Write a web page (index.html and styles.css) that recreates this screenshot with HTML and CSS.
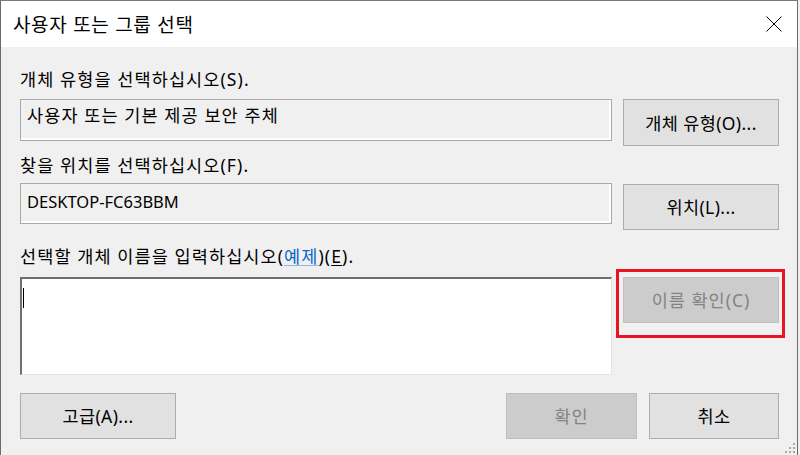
FILE: index.html
```html
<!DOCTYPE html>
<html lang="ko">
<head>
<meta charset="utf-8">
<link rel="stylesheet" href="styles.css">
</head>
<body>
<div class="window">
  <div class="titlebar">
    <span class="title">사용자 또는 그룹 선택</span>
    <div class="close">
      <svg width="16" height="16" viewBox="0 0 16 16"><path d="M0.5 0.5L15.5 15.5M15.5 0.5L0.5 15.5" stroke="#000" stroke-width="1" fill="none"/></svg>
    </div>
  </div>
  <div class="content">
    <div class="label l1">개체 유형을 선택하십시오(S).</div>
    <div class="row r1">
      <div class="field f1">사용자 또는 기본 제공 보안 주체</div>
      <div class="btn side">개체 유형(O)...</div>
    </div>
    <div class="label l2">찾을 위치를 선택하십시오(F).</div>
    <div class="row r2">
      <div class="field f2">DESKTOP-FC63BBM</div>
      <div class="btn side b2">위치(L)...</div>
    </div>
    <div class="label l3">선택할 개체 이름을 입력하십시오(<span class="link">예제</span>)(<span class="acc">E</span>).</div>
    <div class="row r3">
      <div class="names"><span class="caret"></span></div>
      <div class="hl">
        <div class="btn side disabled">이름 확인(C)</div>
      </div>
    </div>
    <div class="row bottom">
      <div class="btn adv">고급(A)...</div>
      <div class="spacer"></div>
      <div class="btn ok disabled">확인</div>
      <div class="btn cancel">취소</div>
    </div>
  </div>
  <svg class="grip" width="10" height="10" viewBox="0 0 10 10">
    <rect x="8" y="0" width="2" height="2" fill="#a8a8a8"/>
    <rect x="4" y="4" width="2" height="2" fill="#a8a8a8"/>
    <rect x="8" y="4" width="2" height="2" fill="#a8a8a8"/>
    <rect x="0" y="8" width="2" height="2" fill="#a8a8a8"/>
    <rect x="4" y="8" width="2" height="2" fill="#a8a8a8"/>
    <rect x="8" y="8" width="2" height="2" fill="#a8a8a8"/>
  </svg>
</div>
</body>
</html>
```
FILE: styles.css
```css
* { box-sizing: border-box; }
html, body { margin: 0; padding: 0; }
body {
  background: #f0f0f0;
  font-family: "Noto Sans", "Noto Sans CJK KR", sans-serif;
  color: #000;
}
.window {
  position: relative;
  width: 798px;
  height: 455px;
  border-left: 1px solid #6a6a6a;
  border-top: 1px solid #7a7a7a;
  border-right: 1px solid #6a6a6a;
  background: #f0f0f0;
  overflow: hidden;
}
.titlebar {
  height: 46px;
  background: #fff;
  display: flex;
  align-items: center;
  justify-content: space-between;
  padding-left: 12px;
}
.title {
  font-size: 19px;
  letter-spacing: 0.6px;
  line-height: 24px;
  font-family: "Noto Sans CJK KR", sans-serif;
}
.close {
  width: 47px;
  height: 46px;
  display: flex;
  align-items: center;
  justify-content: center;
}
.close svg { display: block; }
.content {
  padding: 21px 18px 0 19px;
  font-size: 17.5px;
  letter-spacing: 1.1px;
}
.label {
  height: 22px;
  line-height: 22px;
  white-space: nowrap;
}
.row {
  display: flex;
  align-items: flex-start;
  gap: 11px;
}
.r1 { margin-top: 9px; height: 47px; }
.l2 { margin-top: 8px; }
.r2 { margin-top: 7px; height: 47px; }
.l3 { margin-top: 15px; }
.r3 { margin-top: 10px; height: 98px; }
.bottom { margin-top: 18px; gap: 12px; }
.field {
  flex: 0 0 592px;
  height: 42px;
  border: 1px solid #a9a9a9;
  box-shadow: inset -2px -2px 0 #fff;
  background: #f0f0f0;
  padding: 4px 0 0 6px;
  line-height: 22px;
  white-space: nowrap;
}
.f2 {
  height: 41px;
  padding-top: 7px;
  font-size: 16.5px;
  letter-spacing: 0;
}
.btn {
  height: 47px;
  background: #e1e1e1;
  border: 1px solid #adadad;
  display: flex;
  align-items: center;
  justify-content: center;
  white-space: nowrap;
  line-height: 22px;
  letter-spacing: 0.4px;
}
.side { flex: 0 0 156px; width: 156px; }
.b2 { margin-top: 1px; height: 46px; }
.disabled {
  background: #cccccc;
  border-color: #bfbfbf;
  color: #838383;
  letter-spacing: 1px;
}
.link {
  color: #0a66c8;
  text-decoration: underline;
  text-decoration-color: #8fb5e6;
  text-underline-offset: 2px;
}
.acc {
  text-decoration: underline;
  text-underline-offset: 2px;
}
.names {
  flex: 0 0 592px;
  height: 98px;
  background: #fff;
  border-style: solid;
  border-width: 2px 1px 1px 2px;
  border-color: #6f6f6f #e3e3e3 #e3e3e3 #6f6f6f;
  padding: 9px 0 0 1px;
}
.caret {
  display: block;
  width: 1px;
  height: 20px;
  background: #000;
}
.hl {
  position: relative;
  flex: 0 0 156px;
}
.hl .btn { height: 46px; }
.hl::after {
  content: "";
  position: absolute;
  left: -7px;
  top: -8px;
  right: -6px;
  height: 63px;
  border: 3px solid #e8141f;
  pointer-events: none;
}
.adv { width: 156px; height: 46px; }
.spacer { flex: 1; }
.ok { width: 131px; height: 46px; }
.cancel { width: 130px; height: 46px; }
.grip {
  position: absolute;
  right: 2px;
  bottom: 2px;
}
```
